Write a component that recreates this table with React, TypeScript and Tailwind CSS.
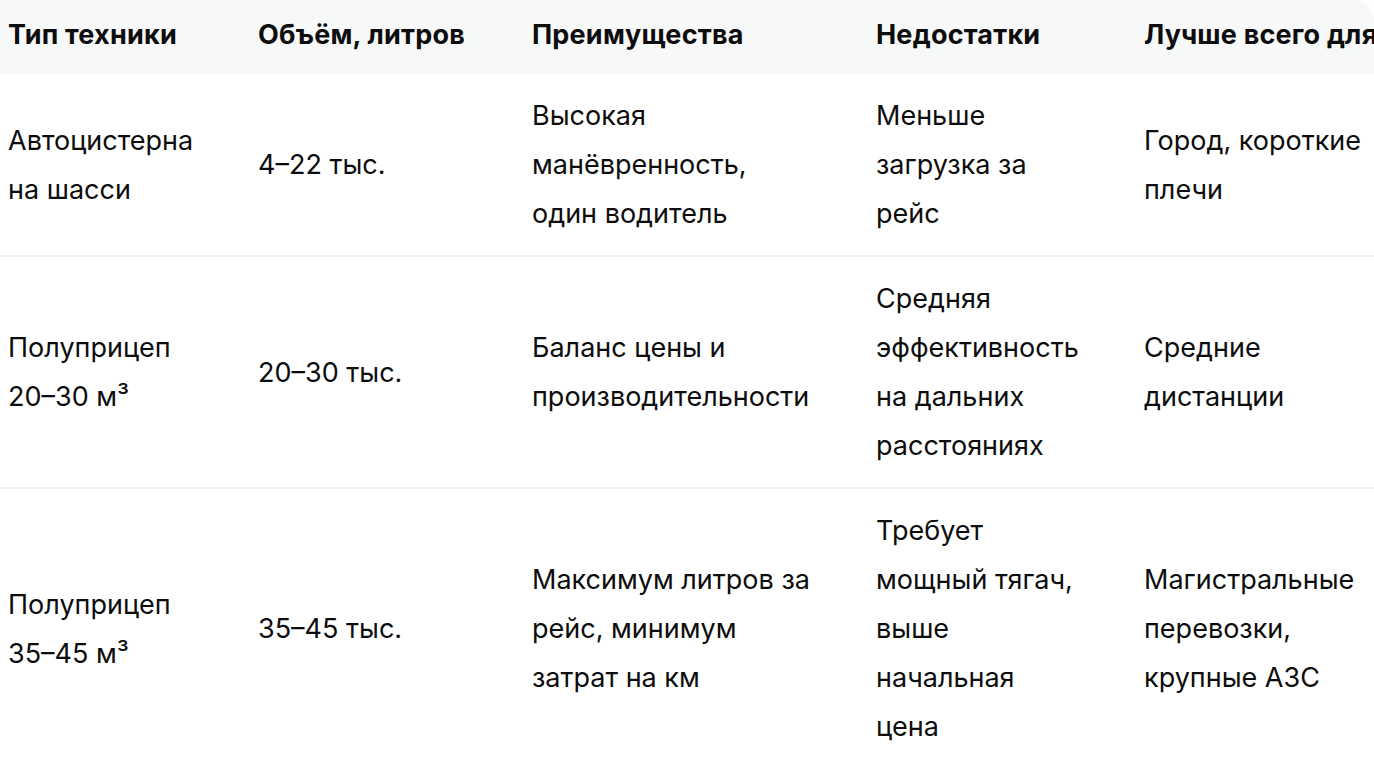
import React from "react";

const widths = ["w-[258px]", "w-[274px]", "w-[344px]", "w-[268px]", "w-[260px]"];

const headers = ["Тип техники", "Объём, литров", "Преимущества", "Недостатки", "Лучше всего для"];

const rows: React.ReactNode[][] = [
  [
    <>Автоцистерна<br />на шасси</>,
    <>4–22 тыс.</>,
    <>Высокая<br />манёвренность,<br />один водитель</>,
    <>Меньше<br />загрузка за<br />рейс</>,
    <>Город, короткие<br />плечи</>,
  ],
  [
    <>Полуприцеп<br />20–30 м³</>,
    <>20–30 тыс.</>,
    <>Баланс цены и<br />производительности</>,
    <>Средняя<br />эффективность<br />на дальних<br />расстояниях</>,
    <>Средние<br />дистанции</>,
  ],
  [
    <>Полуприцеп<br />35–45 м³</>,
    <>35–45 тыс.</>,
    <>Максимум литров за<br />рейс, минимум<br />затрат на км</>,
    <>Требует<br />мощный тягач,<br />выше<br />начальная<br />цена</>,
    <>Магистральные<br />перевозки,<br />крупные АЗС</>,
  ],
];

export default function App() {
  return (
    <div className="w-[1374px] h-[758px] overflow-hidden bg-white" style={{ fontFamily: "Inter, 'Noto Sans', sans-serif" }}>
      <div className="w-[1374px] overflow-hidden rounded-tr-[20px]">
        <table className="w-[1404px] min-w-[1404px] border-collapse table-fixed text-[27px] leading-[49px] text-[#0d0d0d] whitespace-nowrap">
          <colgroup>
            {widths.map((w, i) => (
              <col key={i} className={w} />
            ))}
          </colgroup>
          <thead>
            <tr className="bg-[#f7f8f8]">
              {headers.map((h, i) => (
                <th key={i} className={`${i === 0 ? "pl-[8px]" : ""} h-[74px] pb-[6px] text-left font-bold align-middle tracking-[0.2px] overflow-hidden`}>
                  {h}
                </th>
              ))}
            </tr>
          </thead>
          <tbody>
            {rows.map((r, ri) => (
              <tr key={ri} className={ri < rows.length - 1 ? "border-b-2 border-[#eef0f0]" : ""}>
                {r.map((c, ci) => (
                  <td key={ci} className={`${ci === 0 ? "pl-[8px]" : ""} py-[17px] align-middle font-normal`}>
                    {c}
                  </td>
                ))}
              </tr>
            ))}
          </tbody>
        </table>
      </div>
    </div>
  );
}
